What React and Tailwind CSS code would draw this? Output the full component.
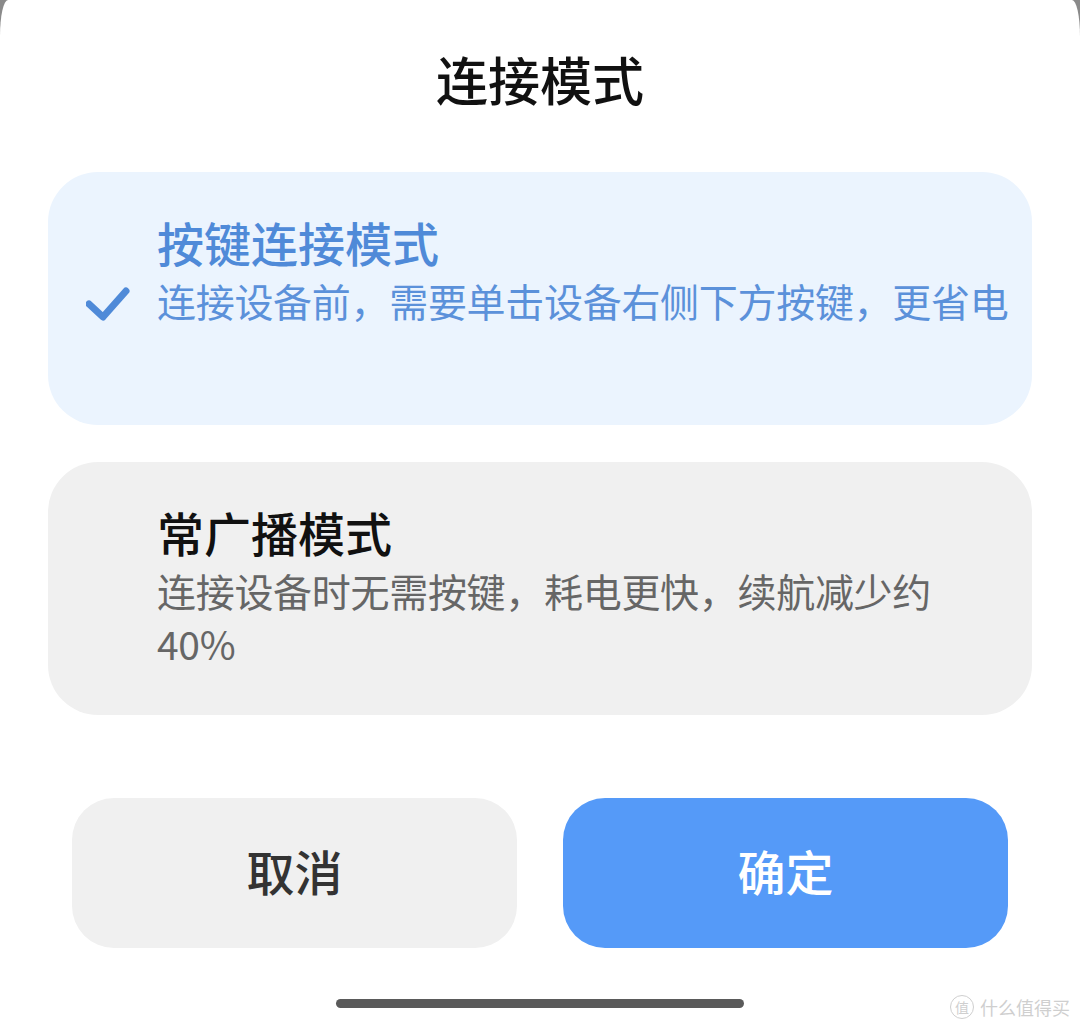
import { useState } from "react";

const FONT = { fontFamily: '"Noto Sans CJK SC", "Noto Sans", sans-serif' };

const modes = [
  {
    id: "button",
    title: "按键连接模式",
    desc: ["连接设备前，需要单击设备右侧下方按键，更省电"],
  },
  {
    id: "broadcast",
    title: "常广播模式",
    desc: ["连接设备时无需按键，耗电更快，续航减少约", "40%"],
  },
];

function CheckMark() {
  return (
    <svg width="44" height="36" viewBox="0 0 44 36" fill="none">
      <polyline
        points="3,17 17,30 40,4"
        stroke="#4f8ad8"
        strokeWidth="7"
        strokeLinecap="round"
        strokeLinejoin="round"
      />
    </svg>
  );
}

function ModeCard({ mode, selected, onSelect }) {
  return (
    <button
      onClick={onSelect}
      className={`grid h-[253px] w-full grid-cols-[109px_1fr] content-start rounded-[50px] pt-[42px] text-left ${
        selected ? "bg-[#ebf4fe]" : "bg-[#f0f0f0]"
      }`}
    >
      <div />
      <div
        className={`text-[47px] font-medium leading-[56px] ${
          selected ? "text-[#4f8ad8]" : "text-[#111111]"
        }`}
      >
        {mode.title}
      </div>
      <div className="mt-[4px] flex h-[53px] items-center pl-[38px] pt-[8px]">
        {selected && <CheckMark />}
      </div>
      <div
        className={`mt-[4px] whitespace-nowrap text-[39px] leading-[53px] tracking-[-0.3px] ${
          selected ? "text-[#5b91da]" : "text-[#666666]"
        }`}
      >
        {mode.desc.map((line) => (
          <div key={line}>{line}</div>
        ))}
      </div>
    </button>
  );
}

export default function App() {
  const [mode, setMode] = useState("button");

  return (
    <div className="relative h-[1029px] w-[1080px] overflow-hidden bg-[#8a8a8a]" style={FONT}>
      <div className="flex h-full flex-col rounded-t-[8px_36px] bg-white">
        <h1 className="pt-[47px] text-center text-[52px] font-medium leading-[64px] text-[#111111]">
          连接模式
        </h1>

        <div className="mt-[61px] flex flex-col gap-[37px] px-[48px]">
          {modes.map((m) => (
            <ModeCard
              key={m.id}
              mode={m}
              selected={mode === m.id}
              onSelect={() => setMode(m.id)}
            />
          ))}
        </div>

        <div className="mt-[83px] flex gap-[46px] px-[72px]">
          <button className="flex h-[150px] flex-1 items-center justify-center rounded-[42px] bg-[#f0f0f0] pb-[6px] text-[48px] font-medium text-[#333333]">
            取消
          </button>
          <button className="flex h-[150px] flex-1 items-center justify-center rounded-[42px] bg-[#559af8] pb-[6px] text-[48px] font-medium text-white">
            确定
          </button>
        </div>

        <div className="mt-[51px] flex justify-center">
          <div className="h-[9px] w-[408px] rounded-full bg-[#5a5a5a]" />
        </div>
      </div>

      {/* watermark */}
      <div className="absolute bottom-[10px] right-[10px] flex items-center gap-[6px] text-[#cfcfcf]">
        <div className="flex h-[24px] w-[24px] items-center justify-center rounded-full border border-[#cfcfcf] text-[14px] leading-none">
          值
        </div>
        <span className="text-[18px] leading-none">什么值得买</span>
      </div>
    </div>
  );
}
